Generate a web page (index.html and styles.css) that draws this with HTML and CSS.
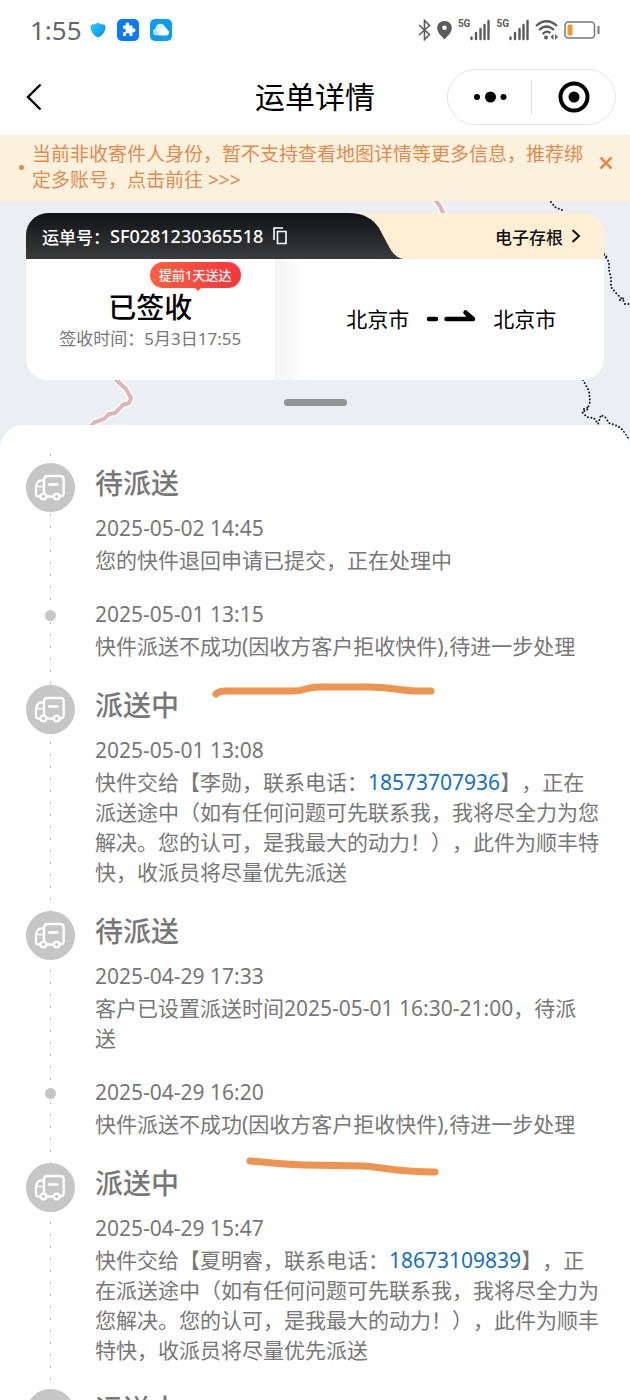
FILE: index.html
```html
<!DOCTYPE html>
<html lang="zh-CN">
<head>
  <meta charset="UTF-8">
  <meta name="viewport" content="width=device-width, initial-scale=1.0">
  <title>运单详情</title>
  <link rel="stylesheet" href="styles.css">
</head>
<body>
  <svg class="defs" width="0" height="0" aria-hidden="true">
    <symbol id="truck" viewBox="0 0 49 49">
      <g fill="none" stroke="#fff" stroke-width="2.300" stroke-linecap="round" stroke-linejoin="round">
        <path d="M21 33.500H27.500M34 33.500C37 33.500 37.700 32 37.700 30V16.500Q37.700 13 34.500 13H21.500Q18 13 18 16.500V29.500"/>
        <path d="M17.500 17.500H15Q12.500 17.500 11.500 19.500L10.500 22Q10 23 10 24.500V31Q10 33.500 12.500 33.500H14"/>
        <path d="M11 23.500H17" stroke-width="1.600"/>
        <path d="M23 21.500H31.500"/>
        <circle cx="17.500" cy="33.500" r="2.800"/>
        <circle cx="30.700" cy="33.500" r="2.800"/>
      </g>
    </symbol>
    <symbol id="bars" viewBox="0 0 20 24">
      <path d="M1.500 19.500V21M6 15V21M10.500 11V21M14.500 7V21M18.500 3V21" fill="none" stroke="#5c5c5c" stroke-width="2.400" stroke-linecap="round"/>
    </symbol>
  </svg>

  <div class="page">
    <header>
      <div class="status-bar">
        <span class="clock">1:55</span>
        <div class="app-icons">
          <svg width="16" height="16" viewBox="0 0 16 16">
            <defs><linearGradient id="shieldFill" x1="0" y1="0" x2="1" y2="1"><stop offset="0" stop-color="#35cdf8"/><stop offset="1" stop-color="#0088f5"/></linearGradient></defs>
            <path d="M8 .500Q10 2.500 13.500 2.500Q15.500 2.600 15.500 4.500Q15.500 12 8 15.500Q.500 12 .500 4.500Q.500 2.600 2.500 2.500Q6 2.500 8 .500Z" fill="url(#shieldFill)"/>
          </svg>
          <svg width="22" height="22" viewBox="0 0 22 22">
            <rect width="22" height="22" rx="5" fill="#0a7af5"/>
            <path d="M6 6.500H9Q8 3.500 10.500 3.500T12 6.500H15.500V9.500Q18.500 8.500 18.500 11.200T15.500 13V17H12.500Q13 14 10.700 14T9 17H6V13.500Q8.800 14 8.800 11.500T6 9.800Z" fill="#fff"/>
          </svg>
          <svg width="22" height="22" viewBox="0 0 22 22">
            <rect width="22" height="22" rx="5" fill="#0b9df3"/>
            <circle cx="6.500" cy="13" r="3.500" fill="#b6e0fb"/>
            <circle cx="10.500" cy="9.500" r="4.800" fill="#d8effd"/>
            <path d="M9 16.500A3.500 3.500 0 0 1 10.500 11.500Q12 8 15 8.500Q17.500 9 17.500 11Q19.500 12 19 14.300Q18.500 16.500 16 16.500Z" fill="#fff"/>
          </svg>
        </div>
        <div class="phone-icons">
          <svg width="13" height="22" viewBox="0 0 13 22"><path d="M1 6L11.500 15.500L6.500 20.500V1.500L11.500 6.500L1 16" fill="none" stroke="#5c5c5c" stroke-width="1.600"/></svg>
          <svg width="15" height="20" viewBox="0 0 15 20"><path fill-rule="evenodd" d="M7.500 1C12 1 14.800 4 14.800 8C14.800 13 9.500 17 7.500 19.500C5.500 17 .200 13 .200 8C.200 4 3 1 7.500 1ZM7.500 5.500A2.300 2.300 0 1 0 7.500 10.100A2.300 2.300 0 1 0 7.500 5.500Z" fill="#5c5c5c"/></svg>
          <div class="signal"><span>5G</span><svg width="20" height="24"><use href="#bars"/></svg></div>
          <div class="signal"><span>5G</span><svg width="20" height="24"><use href="#bars"/></svg></div>
          <svg width="23" height="22" viewBox="0 0 23 22">
            <path d="M1 7Q11.500-2.500 22 7M4 11Q11.500 4 19 11M7.500 15Q11.500 11 15.500 14" fill="none" stroke="#5c5c5c" stroke-width="2.200"/>
            <circle cx="11" cy="18.500" r="2" fill="#5c5c5c"/>
            <path d="M18.500 15V21L15.500 18ZM20 15V21L23 18Z" fill="#5c5c5c"/>
          </svg>
          <svg width="36" height="20" viewBox="0 0 36 20">
            <rect x="1" y="2" width="29.500" height="16" rx="3.500" fill="none" stroke="#777" stroke-width="1.500"/>
            <rect x="3.500" y="4.500" width="5" height="11" rx="1.500" fill="#f2992e"/>
            <path d="M34.500 6V14" stroke="#777" stroke-width="2"/>
          </svg>
        </div>
      </div>

      <nav class="nav-bar">
        <button class="back" aria-label="返回">
          <svg width="18" height="28" viewBox="0 0 18 28"><path d="M14.500 1.500L2 14L14.500 26.500" fill="none" stroke="#000" stroke-width="2.400"/></svg>
        </button>
        <h1>运单详情</h1>
        <div class="capsule">
          <button aria-label="更多">
            <svg width="34" height="12" viewBox="0 0 34 12"><circle cx="4" cy="6" r="3"/><circle cx="17.500" cy="6" r="5.500"/><circle cx="30.500" cy="6" r="3"/></svg>
          </button>
          <button aria-label="关闭小程序">
            <svg width="32" height="32" viewBox="0 0 32 32"><circle cx="16" cy="16" r="13.500" fill="none" stroke="#000" stroke-width="4"/><circle cx="16" cy="16" r="5.500"/></svg>
          </button>
        </div>
      </nav>
    </header>

    <div class="notice">
      <span class="notice-dot"></span>
      <p>当前非收寄件人身份，暂不支持查看地图详情等更多信息，推荐绑<br>定多账号，点击前往 &gt;&gt;&gt;</p>
      <button aria-label="关闭提示">
        <svg width="14" height="14" viewBox="0 0 14 14"><path d="M1.500 1.500L12.500 12.500M12.500 1.500L1.500 12.500" stroke="#e58a4c" stroke-width="2.600"/></svg>
      </button>
    </div>

    <section class="map">
      <svg class="map-lines" viewBox="0 201 630 248" preserveAspectRatio="xMidYMin slice" aria-hidden="true">
        <g fill="none" stroke-linejoin="round">
          <g stroke="#fff" stroke-width="7">
            <path d="M112 376L126 389L131 398L129 403L123 405L115 413L109 414L104 419L95 422L88 429"/>
            <path d="M434 199L440 206L445 217"/>
          </g>
          <g stroke="#ddb6b7" stroke-width="4">
            <path d="M112 376L126 389L131 398L129 403L123 405L115 413L109 414L104 419L95 422L88 429"/>
            <path d="M434 199L440 206L445 217"/>
          </g>
          <g stroke="#111" stroke-width="2" stroke-linecap="round" stroke-dasharray="0 3.500">
            <path d="M551 202L555 207L564 211"/>
            <path d="M604 255L609 262L609 270L611 278L611 287L616 293L623 300L625 304L630 304"/>
            <path d="M583 380L589 391L590 402L587 410L582 412L587 417L594 418L598 424L601 415L605 417L609 423L615 425L621 428L628 438"/>
            <path d="M604 254L608 258M620 300L624 298M584 409L589 407"/>
          </g>
        </g>
      </svg>

      <div class="card">
        <div class="card-head">
          <svg class="head-shape" width="379" height="46" viewBox="0 0 379 46" aria-hidden="true">
            <defs><linearGradient id="headFill" x1="0" y1="0" x2="0" y2="1"><stop offset="0" stop-color="#0f1316"/><stop offset="1" stop-color="#3b3b3c"/></linearGradient></defs>
            <path d="M0 0H322C338 0 347 6 353 15L361 30C366 40 371 46 379 46H0Z" fill="url(#headFill)"/>
          </svg>
          <div class="waybill">
            <span>运单号：</span><span class="waybill-no">SF0281230365518</span>
            <button aria-label="复制运单号">
              <svg width="14" height="18" viewBox="0 0 14 18"><path d="M1 13V1H10M4.500 4.500H13V16.500H4.500Z" fill="none" stroke="#fff" stroke-width="1.600"/></svg>
            </button>
          </div>
          <a class="stub" href="#">电子存根
            <svg width="10" height="16" viewBox="0 0 10 16"><path d="M1.500 2L8 8L1.500 14" fill="none" stroke="#111" stroke-width="2"/></svg>
          </a>
        </div>
        <div class="card-body">
          <div class="signed">
            <span class="badge">提前1天送达</span>
            <strong>已签收</strong>
            <span class="signed-time">签收时间：5月3日17:55</span>
          </div>
          <div class="route">
            <span>北京市</span>
            <svg width="50" height="18" viewBox="0 0 50 18"><path d="M3 10H10M20.500 10H47L39.500 3.500" fill="none" stroke="#000" stroke-width="4.500" stroke-linecap="round" stroke-linejoin="round"/><path d="M39.500 3.500L47 10H40Z"/></svg>
            <span>北京市</span>
          </div>
        </div>
      </div>
      <div class="handle"></div>
    </section>

    <main class="sheet">
      <ol class="timeline">
        <li class="stage">
          <span class="stage-icon"><svg width="49" height="49"><use href="#truck"/></svg></span>
          <h2>待派送</h2>
          <time>2025-05-02 14:45</time>
          <p>您的快件退回申请已提交，正在处理中</p>
        </li>
        <li>
          <span class="dot"></span>
          <time>2025-05-01 13:15</time>
          <p>快件派送不成功(因收方客户拒收快件),待进一步处理</p>
          <svg class="mark mark-first" width="226" height="20" viewBox="0 0 226 20" aria-hidden="true"><path d="M6 16Q9 13 15 13H84C94 13 98 9 108 9H160C178 9 194 13 208 13H221" fill="none" stroke="#ef9350" stroke-width="7" stroke-linecap="round"/></svg>
        </li>
        <li class="stage">
          <span class="stage-icon"><svg width="49" height="49"><use href="#truck"/></svg></span>
          <h2>派送中</h2>
          <time>2025-05-01 13:08</time>
          <p>快件交给【李勋，联系电话：<a href="tel:18573707936">18573707936</a>】，正在派送途中（如有任何问题可先联系我，我将尽全力为您解决。您的认可，是我最大的动力！），此件为顺丰特快，收派员将尽量优先派送</p>
        </li>
        <li class="stage">
          <span class="stage-icon"><svg width="49" height="49"><use href="#truck"/></svg></span>
          <h2>待派送</h2>
          <time>2025-04-29 17:33</time>
          <p>客户已设置派送时间2025-05-01 16:30-21:00，待派<br>送</p>
        </li>
        <li>
          <span class="dot"></span>
          <time>2025-04-29 16:20</time>
          <p>快件派送不成功(因收方客户拒收快件),待进一步处理</p>
          <svg class="mark mark-second" width="200" height="22" viewBox="0 0 200 22" aria-hidden="true"><path d="M5 5C28 7 42 9 60 9L118 10C138 11 150 16 190 16" fill="none" stroke="#ef9350" stroke-width="7" stroke-linecap="round"/></svg>
        </li>
        <li class="stage">
          <span class="stage-icon"><svg width="49" height="49"><use href="#truck"/></svg></span>
          <h2>派送中</h2>
          <time>2025-04-29 15:47</time>
          <p>快件交给【夏明睿，联系电话：<a href="tel:18673109839">18673109839</a>】，正在派送途中（如有任何问题可先联系我，我将尽全力为您解决。您的认可，是我最大的动力！），此件为顺丰特快，收派员将尽量优先派送</p>
        </li>
        <li class="stage">
          <span class="stage-icon"><svg width="49" height="49"><use href="#truck"/></svg></span>
          <h2>运送中</h2>
        </li>
      </ol>
    </main>
  </div>
</body>
</html>
```

FILE: styles.css
```css
* {
  box-sizing: border-box;
}
body {
  margin: 0;
  background: #fff;
  color: #111;
  font-family: "Noto Sans", "Noto Sans CJK SC", sans-serif;
  text-spacing-trim: space-all;
}
h1, h2, p, ol {
  margin: 0;
  padding: 0;
}
button {
  display: flex;
  align-items: center;
  justify-content: center;
  padding: 0;
  border: 0;
  background: none;
  cursor: pointer;
}
a {
  text-decoration: none;
}
svg {
  display: block;
  flex-shrink: 0;
}
.defs {
  position: absolute;
}
.page {
  height: 100vh;
  overflow: hidden;
}

/* status bar */
.status-bar {
  display: flex;
  align-items: center;
  height: 60px;
  padding: 0 30px;
}
.clock {
  color: #666;
  font-size: 26px;
  line-height: 32px;
}
.app-icons {
  display: flex;
  align-items: center;
  gap: 11px;
  margin-left: 8px;
}
.phone-icons {
  display: flex;
  align-items: center;
  gap: 6px;
  margin-left: auto;
}
.signal {
  display: flex;
}
.signal span {
  color: #5c5c5c;
  font-family: Roboto, sans-serif;
  font-size: 10px;
  line-height: 12px;
  font-weight: 700;
}

/* nav bar */
.nav-bar {
  display: grid;
  grid-template-columns: 1fr auto 1fr;
  align-items: center;
  height: 75px;
  padding: 0 14px 2px 26px;
}
.nav-bar h1 {
  font-size: 30px;
  line-height: 40px;
  font-weight: 400;
  color: #000;
  padding-right: 12px;
}
.back {
  width: 18px;
}
.capsule {
  display: flex;
  justify-self: end;
  width: 169px;
  height: 56px;
  padding: 10px 0;
  border: 1px solid #e4e4e4;
  border-radius: 28px;
}
.capsule button {
  flex: 1;
}
.capsule button + button {
  border-left: 1px solid #ddd;
}

/* notice */
.notice {
  display: flex;
  align-items: center;
  padding: 6px 17px 8px 19px;
  background: #fcf1dc;
  color: #e08b52;
}
.notice-dot {
  width: 5px;
  height: 5px;
  margin-right: 8px;
  border-radius: 50%;
  background: #e08b52;
}
.notice p {
  flex: 1;
  font-size: 19px;
  line-height: 26px;
  white-space: nowrap;
}
.notice button {
  margin-bottom: 8px;
}

/* map */
.map {
  position: relative;
  padding: 12px 26px 43px;
  background: #ebeff3;
}
.map-lines {
  position: absolute;
  inset: 0;
  width: 100%;
  height: 100%;
}
.card {
  position: relative;
  overflow: hidden;
  border-radius: 22px;
  background: #fff;
}
.card-head {
  position: relative;
  display: flex;
  align-items: center;
  justify-content: space-between;
  height: 46px;
  padding: 0 23px 0 16px;
  background: #ffefd5;
  font-size: 17px;
  font-weight: 500;
}
.head-shape {
  position: absolute;
  left: 0;
  top: 0;
}
.waybill {
  position: relative;
  display: flex;
  align-items: center;
  color: #fff;
}
.waybill-no {
  font-size: 18px;
}
.waybill button {
  margin-left: 10px;
}
.stub {
  display: flex;
  align-items: center;
  gap: 8px;
  color: #111;
}
.card-body {
  display: flex;
  height: 121px;
}
.signed {
  position: relative;
  display: flex;
  flex: 0 0 43%;
  flex-direction: column;
  align-items: center;
  padding-top: 28px;
}
.signed strong {
  color: #000;
  font-size: 28px;
  line-height: 40px;
  font-weight: 500;
}
.signed-time {
  color: #777;
  font-size: 17px;
  line-height: 24px;
}
.badge {
  position: absolute;
  top: 3px;
  right: 34px;
  padding: 0 9px;
  border-radius: 13px;
  background: linear-gradient(90deg, #fc6040, #fd343c);
  color: #fff;
  font-size: 13px;
  line-height: 26px;
  font-weight: 500;
}
.badge::after {
  content: "";
  position: absolute;
  left: 50%;
  top: 100%;
  border: 3px solid transparent;
  border-top-color: #fd4a3e;
  border-bottom: 0;
}
.route {
  display: flex;
  flex: 1;
  align-items: center;
  justify-content: center;
  gap: 17px;
  padding: 0 0 4px 24px;
  background: linear-gradient(90deg, #f4f4f4, #fff 30px);
  color: #000;
  font-size: 21px;
}
.handle {
  position: relative;
  width: 63px;
  height: 7px;
  margin: 19px auto 0;
  border-radius: 4px;
  background: #929394;
}

/* timeline */
.sheet {
  position: relative;
  margin-top: -24px;
  padding: 24px 26px 0;
  border-radius: 24px 24px 0 0;
  background: #fff;
}
.timeline {
  padding-top: 14px;
  list-style: none;
  color: #777;
  background: radial-gradient(circle, #bbb 1px, transparent 1px) 23px 0 / 3px 12px repeat-y;
}
.timeline li {
  position: relative;
  padding: 0 4px 22px 69px;
}
.timeline li:has(+ .stage) {
  padding-bottom: 24px;
}
.timeline h2 {
  margin-bottom: 8px;
  font-size: 28px;
  line-height: 40px;
  font-weight: 500;
}
.timeline time {
  display: block;
  font-size: 21px;
  line-height: 34px;
}
.timeline p {
  font-size: 21px;
  line-height: 30px;
}
.timeline a {
  color: #1470c4;
}
.stage-icon {
  position: absolute;
  left: 0;
  top: 0;
  border-radius: 50%;
  background: #c6c6c6;
}
.dot {
  position: absolute;
  left: 19px;
  top: 13px;
  width: 11px;
  height: 11px;
  border-radius: 50%;
  background: #c6c6c6;
}
.mark {
  position: absolute;
  z-index: 1;
}
.mark-first {
  left: 184px;
  top: 81px;
}
.mark-second {
  left: 219px;
  top: 81px;
}
```
